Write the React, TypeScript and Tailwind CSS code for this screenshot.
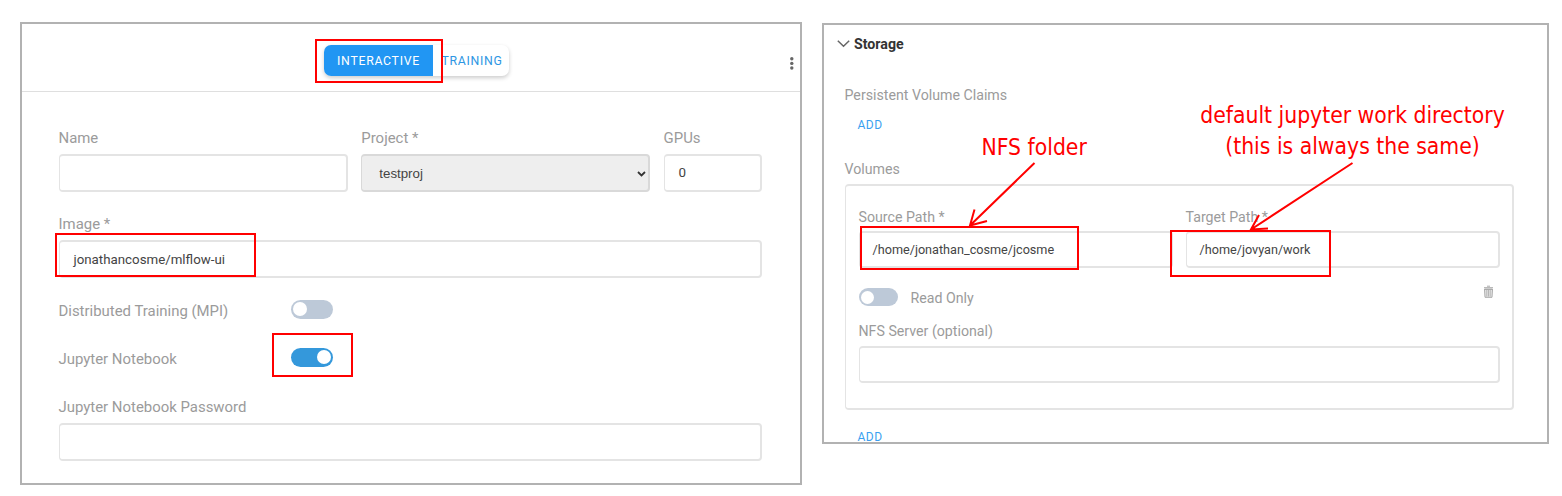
import type { ReactNode } from "react";

const box = "flex items-center rounded-[4px] border-2 border-l border-[#e4e4e4] bg-white";

function Label({ children, small = false }: { children: ReactNode; small?: boolean }) {
  return (
    <div className={`h-5 whitespace-nowrap leading-5 text-[#9b9b9b] ${small ? "text-[14.2px]" : "text-[14.93px]"}`}>
      {children}
    </div>
  );
}

function Toggle({ on = false, small = false }: { on?: boolean; small?: boolean }) {
  return (
    <div
      className={`mb-[2px] flex items-center rounded-full px-[2px] ${small ? "h-[18px] w-[39px]" : "h-[19px] w-[42px]"} ${
        on ? "justify-end bg-[#3498db]" : "bg-[#bdc9d8]"
      }`}
    >
      <div className={`rounded-full bg-white ${small ? "size-[13px]" : "size-[14px]"}`} />
    </div>
  );
}

function JobPanel() {
  return (
    <section className="mt-[22px] ml-5 h-[463px] w-[782px] shrink-0 border-2 border-[#b2b2b2] bg-white">
      <header className="flex h-[68px] items-start border-b border-[#dfdfdf] pt-[21px]">
        <div className="ml-[302px] flex h-[31px] w-[185px] rounded-[7px] text-[12.3px] tracking-[0.7px] shadow-[0_2px_4px_rgba(0,0,0,0.2)]">
          <button className="flex w-[109px] items-center justify-center rounded-l-[7px] bg-[#2196f3] pt-px text-white">INTERACTIVE</button>
          <button className="flex flex-1 items-center pt-px pl-[8.5px] text-[#2e96e3]">TRAINING</button>
        </div>
        <svg className="mt-[10px] ml-[278px] h-4 w-[8px]" viewBox="0 0 8 16" fill="#666">
          <circle cx="4.8" cy="3.8" r="1.7" />
          <circle cx="4.8" cy="8.4" r="1.7" />
          <circle cx="4.8" cy="13" r="1.7" />
        </svg>
      </header>
      <div className="flex flex-col pt-9 pr-[38px] pl-[36.5px]">
        <div className="flex gap-[13.3px]">
          <div className="flex w-[289.5px] flex-col gap-[6px]">
            <Label>Name</Label>
            <div className={`${box} h-[38px]`} />
          </div>
          <div className="flex w-[289px] flex-col gap-[6px]">
            <Label>Project *</Label>
            <div className="flex h-[38px] items-center justify-between rounded-[4px] border-2 border-l border-[#d9d9d9] bg-[#eeeeee] pt-px pr-[2px] pl-[17px] font-['Liberation_Sans'] text-[13.3px] text-[#444]">
              testproj
              <svg className="h-[6px] w-[9px]" viewBox="0 0 9 6" fill="none" stroke="#333" strokeWidth="1.8">
                <path d="M1 1l3.5 3.4L8 1" />
              </svg>
            </div>
          </div>
          <div className="flex flex-1 flex-col gap-[6px]">
            <Label>GPUs</Label>
            <div className={`${box} h-[38px] pt-px pl-[14px] text-[13.4px] text-[#444]`}>0</div>
          </div>
        </div>
        <div className="mt-[22px] flex flex-col gap-[6px]">
          <Label>Image *</Label>
          <div className={`${box} h-[38px] pt-[2px] pl-[14px] text-[13.3px] text-[#444]`}>jonathancosme/mlflow-ui</div>
        </div>
        <div className="mt-[22px] flex h-5 items-center">
          <div className="w-[232.5px] pt-px"><Label>Distributed Training (MPI)</Label></div>
          <Toggle />
        </div>
        <div className="mt-[28px] flex h-5 items-center">
          <div className="w-[232.5px] pt-px"><Label>Jupyter Notebook</Label></div>
          <Toggle on />
        </div>
        <div className="mt-[29px] flex flex-col gap-[6px]">
          <Label>Jupyter Notebook Password</Label>
          <div className={`${box} h-[38px]`} />
        </div>
      </div>
    </section>
  );
}

function StoragePanel() {
  return (
    <section className="mt-[23px] ml-5 h-[421px] w-[727px] shrink-0 overflow-hidden border-2 border-[#b2b2b2] bg-white">
      <div className="flex h-[37px] items-center gap-[4px] pl-[13px] text-[14.2px] font-bold text-[#333]">
        <svg className="h-[8px] w-[13px]" viewBox="0 0 13 8" fill="none" stroke="#666" strokeWidth="1.5">
          <path d="M.8 .8l5.7 5.4L12.2 .8" />
        </svg>
        <span className="pt-[2px]">Storage</span>
      </div>
      <div className="flex flex-col pr-[33px] pl-[20.5px]">
        <div className="mt-[23px]"><Label small>Persistent Volume Claims</Label></div>
        <button className="mt-[10px] ml-[13px] h-5 text-left text-[12px] tracking-[0.5px] text-[#3a9ff0]">ADD</button>
        <div className="mt-[24px]"><Label small>Volumes</Label></div>
        <div className="mt-[5px] flex h-[226px] flex-col rounded-[4px] border-2 border-l border-[#e4e4e4] pt-[21px] pr-3 pl-[13px]">
          <div className="flex gap-[13px]">
            <div className="flex w-[314px] flex-col gap-[4px]">
              <Label small>Source Path *</Label>
              <div className={`${box} h-[37px] pt-px pl-[13px] text-[12.65px] text-[#444]`}>/home/jonathan_cosme/jcosme</div>
            </div>
            <div className="flex flex-1 flex-col gap-[4px]">
              <Label small>Target Path *</Label>
              <div className={`${box} h-[37px] pt-px pl-[13px] text-[12.65px] text-[#444]`}>/home/jovyan/work</div>
            </div>
          </div>
          <div className="mt-[20px] flex h-5 items-center">
            <Toggle small />
            <div className="ml-[13px] flex-1"><Label small>Read Only</Label></div>
            <svg className="mr-[6.500px] mb-[14px] h-[13px] w-[11px]" viewBox="0 0 11 13" fill="none" stroke="#aaa">
              <path d="M1.500 4l.5 8.300h7l.5-8.300z" fill="#e6e6e6" />
              <path d="M1 2.700h9M4 1.200h3M1 4.500h9" />
              <path d="M3.800 5v6.500M5.500 5v6.500M7.200 5v6.500" strokeWidth=".8" />
            </svg>
          </div>
          <div className="mt-[13px] flex flex-col gap-[5px]">
            <Label small>NFS Server (optional)</Label>
            <div className={`${box} h-[37px]`} />
          </div>
        </div>
        <button className="mt-[17px] ml-[13px] h-5 text-left text-[12px] tracking-[0.5px] text-[#3a9ff0]">ADD</button>
      </div>
    </section>
  );
}

function Annotations() {
  const frame = "absolute border-2 border-[#ff0000]";
  const note = "absolute whitespace-nowrap font-['DejaVu_Sans_Condensed','DejaVu_Sans',sans-serif] text-[22.7px] leading-[31px] text-[#ff0000] [font-stretch:condensed]";
  return (
    <div className="pointer-events-none absolute inset-0">
      <div className={`${frame} top-[39px] left-[315px] h-[44px] w-[128px]`} />
      <div className={`${frame} top-[233px] left-[55px] h-[44px] w-[201px]`} />
      <div className={`${frame} top-[333px] left-[272px] h-[44px] w-[81px]`} />
      <div className={`${frame} top-[226px] left-[860px] h-[44px] w-[219px]`} />
      <div className={`${frame} top-[230px] left-[1170px] h-[47px] w-[161px]`} />
      <div className={`${note} top-[132px] left-[981.500px]`}>NFS folder</div>
      <div className={`${note} top-[100px] left-[1200px] w-[305px] text-center`}>
        default jupyter work directory
        <br />
        (this is always the same)
      </div>
      <svg className="absolute inset-0 h-[496px] w-[1562px]" viewBox="0 0 1562 496" fill="none" stroke="#ff0000" strokeWidth="2">
        <path d="M1034.5 163L970 225.500M974.500 209.500L970 225.500L987 221" />
        <path d="M1352.500 163L1251 229.500M1259 215L1251 229.500L1268 228.500" />
      </svg>
    </div>
  );
}

export default function App() {
  return (
    <main className="relative flex h-[496px] w-[1562px] items-start overflow-hidden bg-white font-[Roboto,sans-serif]">
      <JobPanel />
      <StoragePanel />
      <Annotations />
    </main>
  );
}
